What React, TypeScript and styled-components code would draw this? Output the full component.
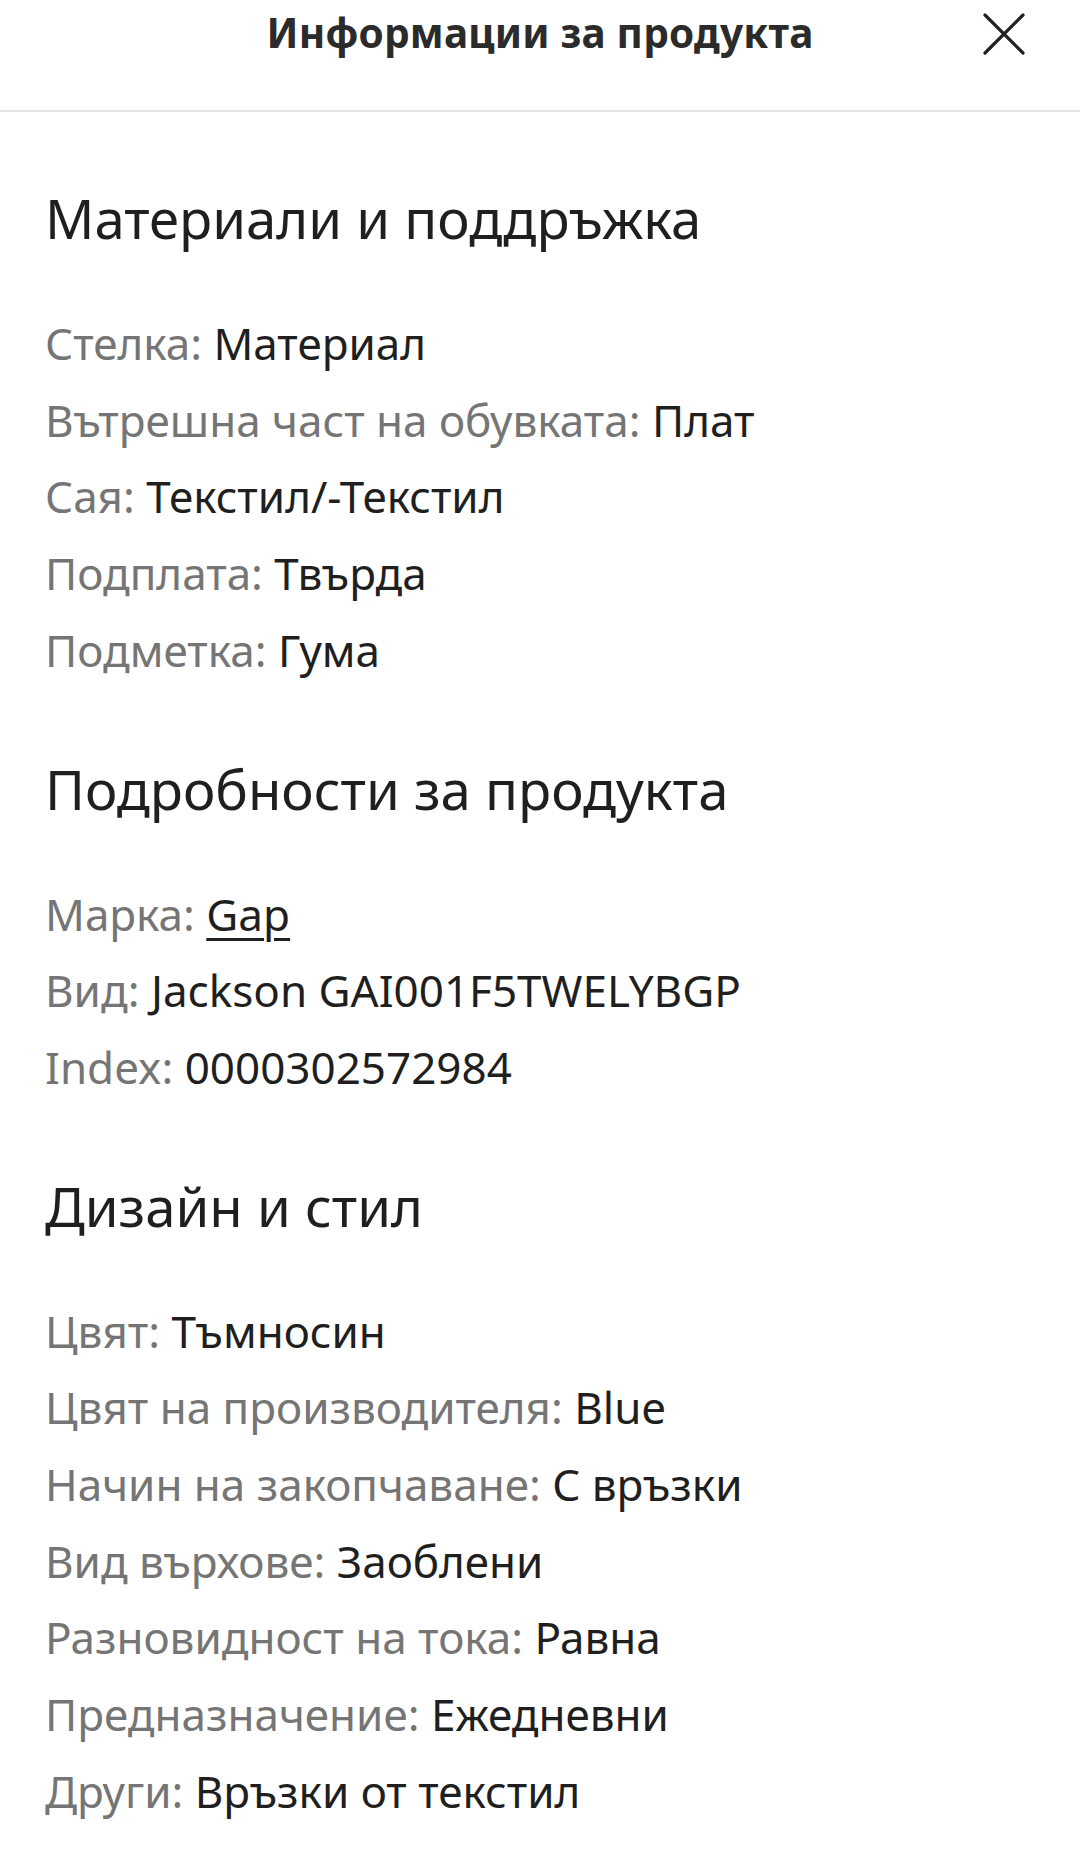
import React from "react";
import styled, { createGlobalStyle } from "styled-components";

const Global = createGlobalStyle`
  html, body { margin: 0; padding: 0; background: #ffffff; }
  body { font-family: "Noto Sans", "Liberation Sans", sans-serif; -webkit-font-smoothing: antialiased; }
  * { box-sizing: border-box; }
`;

const Page = styled.div`
  width: 1080px;
  min-height: 1850px;
  background: #fff;
  overflow: hidden;
`;

const Header = styled.header`
  height: 112px;
  border-bottom: 2px solid #e3e3e3;
  display: grid;
  grid-template-columns: 1fr auto 1fr;
  align-items: start;
`;

const Title = styled.h1`
  grid-column: 2;
  margin: 0;
  padding-top: 4px;
  font-size: 40.5px;
  line-height: 58px;
  font-weight: 700;
  color: #2b2b2b;
  letter-spacing: 0.2px;
`;

const CloseButton = styled.button`
  grid-column: 3;
  justify-self: end;
  margin: 10px 52px 0 0;
  width: 48px;
  height: 48px;
  padding: 0;
  border: none;
  background: transparent;
  display: flex;
  align-items: center;
  justify-content: center;
`;

const Content = styled.main`
  padding: 71px 45px 0 45px;
`;

const Section = styled.section`
  & + & {
    margin-top: 65px;
  }
`;

const Heading = styled.h2`
  margin: 0 0 52px 0;
  font-size: 54.5px;
  line-height: 70px;
  font-weight: 400;
  color: #1f1f1f;
`;

const Row = styled.div`
  font-size: 44px;
  line-height: 76.7px;
  white-space: nowrap;
`;

const Label = styled.span`
  color: #757575;
`;

const Value = styled.span`
  color: #1f1f1f;
`;

const LinkValue = styled.a`
  color: #1f1f1f;
  text-decoration: underline;
  text-decoration-thickness: 3px;
  text-underline-offset: 7px;
`;

type Item = { label: string; value: string; link?: boolean };

const sections: { title: string; items: Item[] }[] = [
  {
    title: "Материали и поддръжка",
    items: [
      { label: "Стелка", value: "Материал" },
      { label: "Вътрешна част на обувката", value: "Плат" },
      { label: "Сая", value: "Текстил/-Текстил" },
      { label: "Подплата", value: "Твърда" },
      { label: "Подметка", value: "Гума" },
    ],
  },
  {
    title: "Подробности за продукта",
    items: [
      { label: "Марка", value: "Gap", link: true },
      { label: "Вид", value: "Jackson GAI001F5TWELYBGP" },
      { label: "Index", value: "0000302572984" },
    ],
  },
  {
    title: "Дизайн и стил",
    items: [
      { label: "Цвят", value: "Тъмносин" },
      { label: "Цвят на производителя", value: "Blue" },
      { label: "Начин на закопчаване", value: "С връзки" },
      { label: "Вид върхове", value: "Заоблени" },
      { label: "Разновидност на тока", value: "Равна" },
      { label: "Предназначение", value: "Ежедневни" },
      { label: "Други", value: "Връзки от текстил" },
    ],
  },
];

export default function App() {
  return (
    <Page>
      <Global />
      <Header>
        <Title>Информации за продукта</Title>
        <CloseButton aria-label="Затвори">
          <svg width="44" height="44" viewBox="0 0 44 44" fill="none">
            <path d="M3 3L41 41M41 3L3 41" stroke="#222" strokeWidth="3.2" strokeLinecap="round" />
          </svg>
        </CloseButton>
      </Header>
      <Content>
        {sections.map((s) => (
          <Section key={s.title}>
            <Heading>{s.title}</Heading>
            {s.items.map((it) => (
              <Row key={it.label}>
                <Label>{it.label}: </Label>
                {it.link ? <LinkValue href="#">{it.value}</LinkValue> : <Value>{it.value}</Value>}
              </Row>
            ))}
          </Section>
        ))}
      </Content>
    </Page>
  );
}
